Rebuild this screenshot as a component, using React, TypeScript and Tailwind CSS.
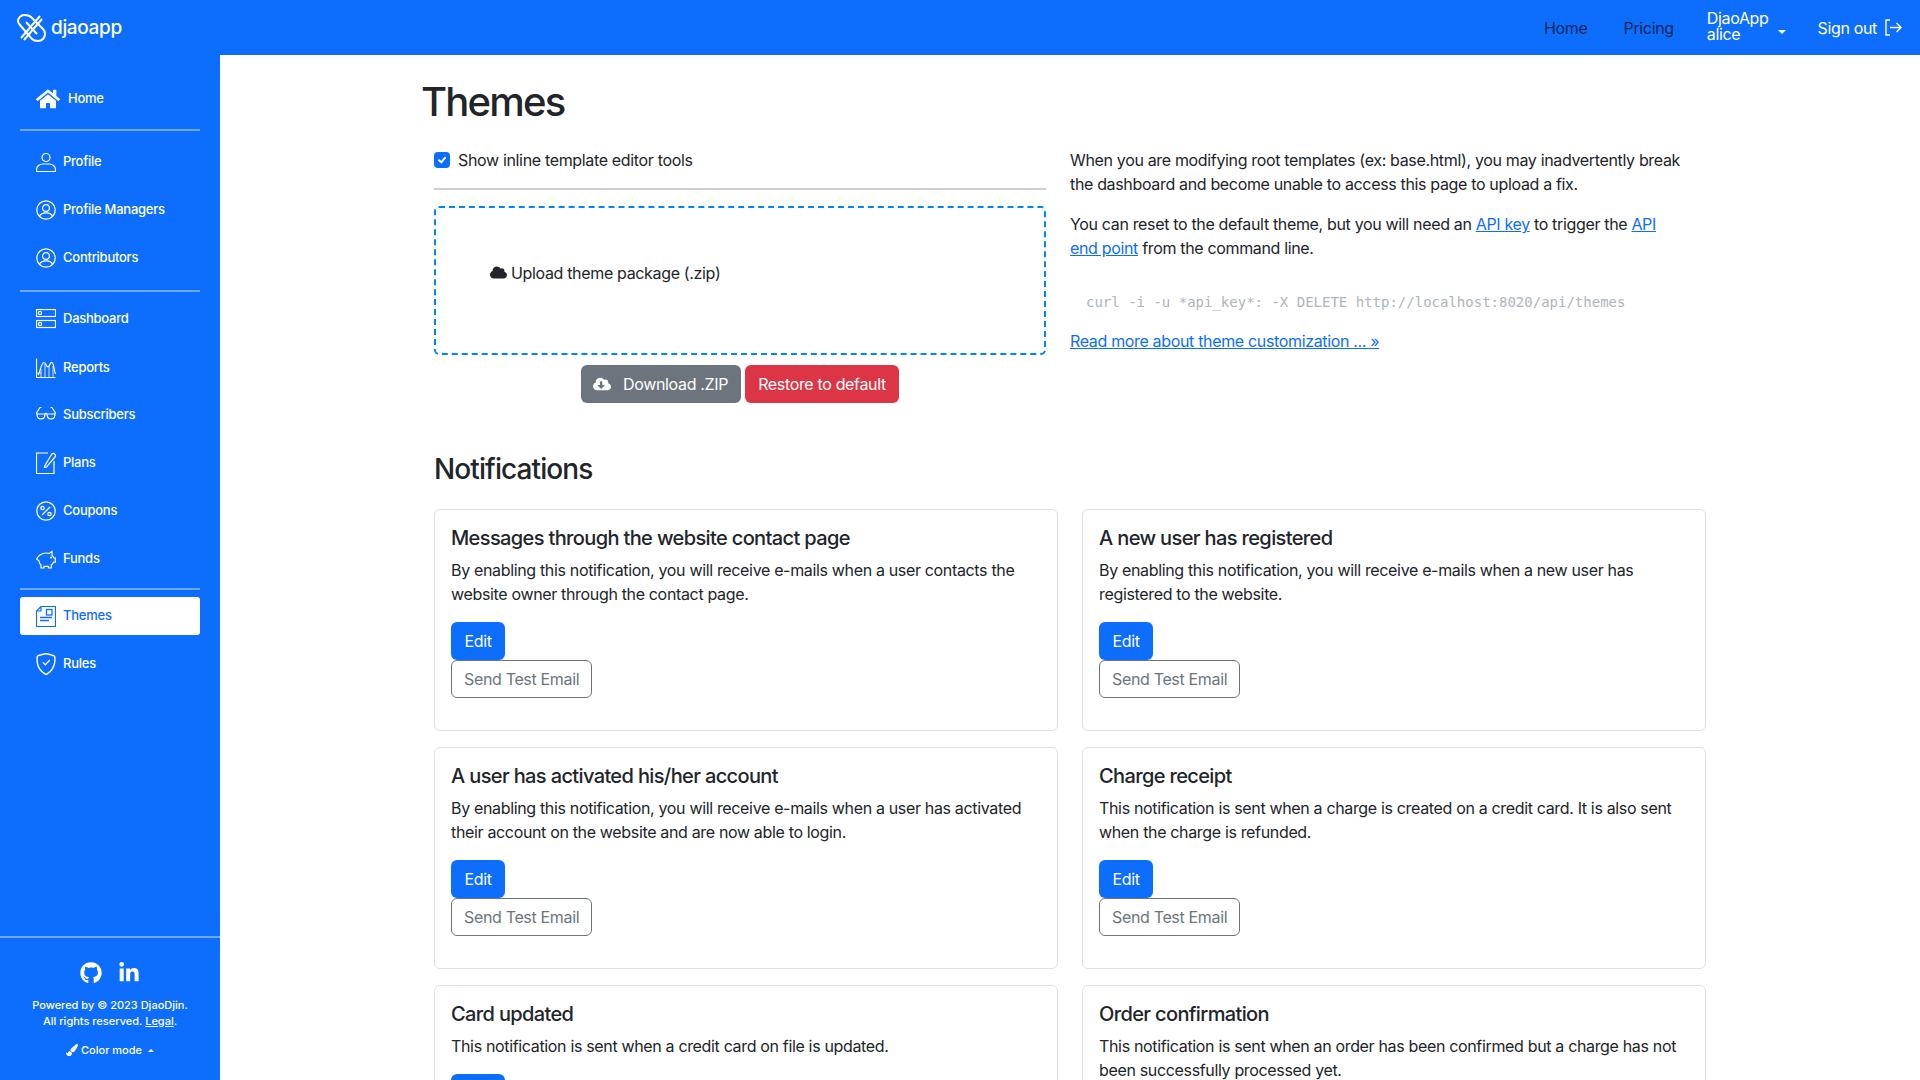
import React from "react";
import { FaHome, FaGithub, FaLinkedinIn, FaCloud, FaCloudDownloadAlt, FaPaintBrush } from "react-icons/fa";
import { BsShieldCheck } from "react-icons/bs";

const S = ({ children, w = 20, h = 20, vb = "0 0 20 20" }: { children: React.ReactNode; w?: number; h?: number; vb?: string }) => (
  <svg width={w} height={h} viewBox={vb} fill="none" stroke="currentColor" strokeWidth={1.2} className="shrink-0">{children}</svg>
);

const Logo = () => (
  <svg width={29} height={29} viewBox="0 0 29 29" fill="none" stroke="white" strokeWidth={2} className="shrink-0">
    <path d="M7 2 C4 2 1 5 1 8 C1 10 2 11 3 12 L15 26 C17 28 19 28 21 28 C25 28 28 25 28 21 C28 19 27 17 26 16 L14 4 C12 2 10 2 7 2 Z" />
    <path d="M4 25 L23 3" />
    <path d="M7 27 L25 6" />
    <path d="M9 9 L20 21" />
  </svg>
);

const Person = () => (
  <S>
    <circle cx="10" cy="5.5" r="4" />
    <path d="M0.5 19.5 V17.5 C0.5 14 4 12 6.5 12 H13.5 C16 12 19.5 14 19.5 17.5 V19.5 Z" />
  </S>
);
const PersonCircle = () => (
  <S>
    <circle cx="10" cy="10" r="9.2" />
    <circle cx="10" cy="8" r="3.4" />
    <path d="M3.5 16.5 C4.5 13.5 7 12.8 10 12.8 C13 12.8 15.5 13.5 16.5 16.5" />
  </S>
);
const Dash = () => (
  <S>
    <rect x="0.5" y="0.5" width="19" height="7" />
    <rect x="0.5" y="11.5" width="19" height="7" />
    <circle cx="4" cy="4" r="1.6" />
    <circle cx="4" cy="15" r="1.6" />
  </S>
);
const Reports = () => (
  <S>
    <path d="M0.5 0.5 V19.5 H19.5" />
    <path d="M2 17 C4 15 5 5 8 4.5 C10 4.5 10 9 12 9 C14 8 14 4 16 4.5 C18 5 18 13 19.5 16" />
    <path d="M5 11 V19 M9 6 V19 M13 8 V19 M17 8 V19 M0.5 15 H5" strokeWidth={0.8} />
  </S>
);
const Glasses = () => (
  <S h={14} vb="0 0 20 14">
    <path d="M1 8 H9 C9 11 8 13 5 13 C2 13 1 11 1 8 Z M11 8 H19 C19 11 18 13 15 13 C12 13 11 11 11 8 Z" />
    <path d="M9 8 C9.5 7.2 10.5 7.2 11 8 M1 8 L0.5 7 L4 1.5 H5.5 M19 8 L19.5 7 L16 1.5 H14.5" />
  </S>
);
const Plans = () => (
  <S h={22} vb="0 0 20 22">
    <path d="M12 1 H0.5 V21.5 H18 V9" />
    <path d="M9 13.5 L8.5 15.5 L10.5 15 L19 5 C19.8 4 19.5 2.8 18.6 2 C17.8 1.2 16.6 1.2 15.8 2 Z" />
  </S>
);
const Coupon = () => (
  <S>
    <circle cx="10" cy="10" r="9.2" />
    <path d="M6 14 L14 6" />
    <circle cx="6.5" cy="7" r="1.7" />
    <circle cx="13.5" cy="13" r="1.7" />
  </S>
);
const Pig = () => (
  <S h={19} vb="0 0 20 19">
    <path d="M0.7 9 C2 5.5 6 3 10 3 C11 3 12 3.2 13 3.6 L16 1.5 V5.2 C17 6.2 17.7 7.2 18 8.2 H19.4 V12.2 H17.5 C17 13.5 16.3 14.2 15.3 15 V18 H12.5 V16.3 H8 V18 H5 V15 C3.5 14 3.2 12.5 3 11 Z" />
    <circle cx="15" cy="7.5" r="0.5" />
  </S>
);
const ThemeIcon = () => (
  <S h={21} vb="0 0 20 21">
    <path d="M5 0.5 H19.5 V20.5 H0.5 V5 Z M5 0.5 V5 H0.5" />
    <rect x="10.5" y="3.5" width="5.5" height="5.5" strokeWidth={1.3} />
    <path d="M4 11.5 H16 M4 14.5 H13" strokeWidth={1.3} />
  </S>
);

const Divider = ({ className }: { className: string }) => <div className={`h-[2px] bg-[#6ea8fe] mx-5 ${className}`} />;

const Item = ({ icon, label, className = "h-12" }: { icon: React.ReactNode; label: string; className?: string }) => (
  <div className={`flex items-center pl-9 text-white ${className}`}>
    <span className="w-[27px] flex items-center shrink-0">{icon}</span>
    <span className="text-[13px] font-medium tracking-[-0.25px]">{label}</span>
  </div>
);

const Sidebar = () => (
  <aside className="w-[220px] shrink-0 bg-[#0d6efd] flex flex-col justify-between text-white">
    <nav className="pt-[20px]">
      <div className="flex items-center h-12 pl-9">
        <FaHome size={24} className="shrink-0 mr-[8px]" />
        <span className="text-[13px] font-medium tracking-[-0.25px]">Home</span>
      </div>
      <Divider className="mt-[6px]" />
      <div className="mt-[7px]">
        <Item icon={<Person />} label="Profile" />
        <Item icon={<PersonCircle />} label="Profile Managers" />
        <Item icon={<PersonCircle />} label="Contributors" />
      </div>
      <Divider className="mt-[8px]" />
      <div className="mt-[2px]">
        <Item icon={<Dash />} label="Dashboard" className="h-[49px]" />
        <Item icon={<Reports />} label="Reports" className="h-[49px]" />
        <Item icon={<span className="-mt-1 flex"><Glasses /></span>} label="Subscribers" className="h-[46px]" />
        <Item icon={<Plans />} label="Plans" className="h-[49px]" />
        <Item icon={<Coupon />} label="Coupons" />
        <Item icon={<Pig />} label="Funds" />
      </div>
      <Divider className="mt-[5px]" />
      <div className="mx-5 mt-[7px] h-[38px] bg-white rounded-[3px] flex items-center pl-4 text-[#0d6efd]">
        <span className="w-[27px] flex items-center shrink-0"><ThemeIcon /></span>
        <span className="text-[13px] font-medium tracking-[-0.25px]">Themes</span>
      </div>
      <Item icon={<BsShieldCheck size={22} className="-ml-px" />} label="Rules" className="h-12 mt-[5px]" />
    </nav>
    <footer className="border-t-2 border-[#6ea8fe] h-[144px] flex flex-col items-center pt-6 tracking-normal">
      <div className="flex items-center gap-4 h-[22px]">
        <FaGithub size={22} />
        <FaLinkedinIn size={22} />
      </div>
      <p className="mt-[13px] text-[11px] leading-4 font-medium text-center">
        Powered by © 2023 DjaoDjin.<br />All rights reserved. <span className="underline">Legal</span>.
      </p>
      <div className="mt-[13px] flex items-center text-[11px] font-medium">
        <FaPaintBrush size={12} className="mr-[3px]" />
        Color mode
        <span className="ml-[6px] w-0 h-0 border-x-[3px] border-x-transparent border-b-[3px] border-b-white" />
      </div>
    </footer>
  </aside>
);

const Header = () => (
  <header className="h-[55px] shrink-0 bg-[#0d6efd] flex items-center text-white">
    <div className="flex items-center pl-[17px] gap-[5px]">
      <Logo />
      <span className="text-[19px] font-medium leading-none">djaoapp</span>
    </div>
    <div className="ml-auto flex items-center pr-[18px]">
      <span className="text-[#052659]">Home</span>
      <span className="ml-9 text-[#052659]">Pricing</span>
      <span className="ml-[33px] leading-4 -mt-[3px]">DjaoApp<br />alice</span>
      <span className="ml-[9px] mt-2 w-0 h-0 border-x-[4px] border-x-transparent border-t-[4px] border-t-white" />
      <span className="ml-8">Sign out</span>
      <svg width={17} height={17} viewBox="0 0 17 17" fill="none" stroke="white" strokeWidth={1.4} className="ml-2">
        <path d="M5 1 H1 V16 H5 M5 8.5 H16 M11.5 4 L16 8.5 L11.5 13" />
      </svg>
    </div>
  </header>
);

const Card = ({ title, body }: { title: string; body: string }) => (
  <div className="border border-[#dee2e6] rounded-md p-4 h-[222px] mb-4">
    <h5 className="text-[20px] leading-6 font-medium tracking-[-0.63px] text-[#212529] mb-2">{title}</h5>
    <p className="text-[#212529] leading-6 mb-4">{body}</p>
    <div className="flex flex-col items-start">
      <button className="h-[38px] px-[13.5px] rounded-md bg-[#0d6efd] text-white">Edit</button>
      <button className="h-[38px] px-3 rounded-md border border-[#6c757d] text-[#6c757d]">Send Test Email</button>
    </div>
  </div>
);

const cards = [
  ["Messages through the website contact page", "By enabling this notification, you will receive e-mails when a user contacts the website owner through the contact page."],
  ["A new user has registered", "By enabling this notification, you will receive e-mails when a new user has registered to the website."],
  ["A user has activated his/her account", "By enabling this notification, you will receive e-mails when a user has activated their account on the website and are now able to login."],
  ["Charge receipt", "This notification is sent when a charge is created on a credit card. It is also sent when the charge is refunded."],
  ["Card updated", "This notification is sent when a credit card on file is updated."],
  ["Order confirmation", "This notification is sent when an order has been confirmed but a charge has not been successfully processed yet."],
];

const Link = ({ children }: { children: React.ReactNode }) => <a className="text-[#0d6efd] underline">{children}</a>;

export default function App() {
  return (
    <div className="h-screen overflow-hidden flex flex-col bg-white text-[#212529] font-['Inter',sans-serif] tracking-[-0.34px]">
      <Header />
      <div className="flex flex-1 min-h-0">
        <Sidebar />
        <main className="flex-1 min-w-0 pl-[203px] overflow-hidden">
          <h1 className="text-[40px] leading-[48px] font-medium tracking-[-1.8px] mt-[23px] -ml-[2px]">Themes</h1>
          <div className="pl-[11px] w-[1283px]">
            <section className="flex mt-[22px] gap-6">
              <div className="w-[612px] shrink-0">
                <label className="flex items-center h-6 mt-0">
                  <span className="w-4 h-4 rounded bg-[#0d6efd] flex items-center justify-center">
                    <svg width={12} height={12} viewBox="0 0 12 12" fill="none" stroke="white" strokeWidth={2} strokeLinecap="round" strokeLinejoin="round"><path d="M3 6.2 L5.2 8.4 L9 3.8" /></svg>
                  </span>
                  <span className="ml-2">Show inline template editor tools</span>
                </label>
                <hr className="mt-4 border-t-2 border-[#cfcfcf]" />
                <div className="mt-4 h-[149px] border-2 border-dashed border-[#0087f7] rounded-[5px] flex items-center pl-[54px] pb-[16px]">
                  <FaCloud size={17} className="mr-1" />
                  <span>Upload theme package (.zip)</span>
                </div>
                <div className="mt-[10px] ml-[147px] flex gap-1">
                  <button className="h-[38px] w-[160px] rounded-md bg-[#6c757d] text-white flex items-center pl-3">
                    <FaCloudDownloadAlt size={18} className="mr-3" />Download .ZIP
                  </button>
                  <button className="h-[38px] w-[154px] rounded-md bg-[#dc3545] text-white">Restore to default</button>
                </div>
              </div>
              <div className="w-[615px]">
                <p className="leading-6">When you are modifying root templates (ex: base.html), you may inadvertently break the dashboard and become unable to access this page to upload a fix.</p>
                <p className="leading-6 mt-4">You can reset to the default theme, but you will need an <Link>API key</Link> to trigger the <Link>API end point</Link> from the command line.</p>
                <pre className="mt-[30px] pl-4 text-[14px] leading-6 tracking-normal text-[#adb5bd] font-['DejaVu_Sans_Mono',monospace]">curl -i -u *api_key*: -X DELETE http://localhost:8020/api/themes</pre>
                <p className="leading-6 mt-[15px]"><Link>Read more about theme customization ... »</Link></p>
              </div>
            </section>
            <h3 className="text-[28px] leading-[34px] font-medium tracking-[-0.9px] mt-[49px]">Notifications</h3>
            <div className="grid grid-cols-2 gap-x-6 w-[1272px] mt-[23px]">
              {cards.map(([t, b]) => <Card key={t} title={t} body={b} />)}
            </div>
          </div>
        </main>
      </div>
    </div>
  );
}
